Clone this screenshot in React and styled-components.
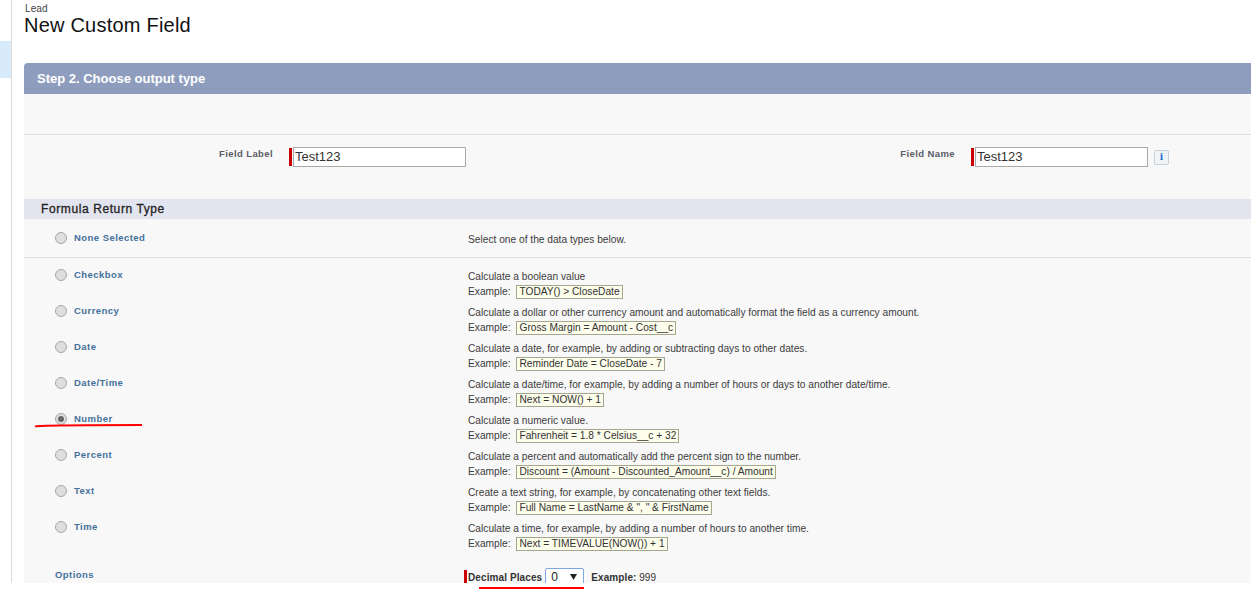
import React from "react"
import styled, { createGlobalStyle } from "styled-components"

const GlobalStyle = createGlobalStyle`
  html, body {
    margin: 0;
    padding: 0;
    background: #fff;
    overflow: hidden;
  }
  body {
    font-family: "Liberation Sans", Arial, sans-serif;
    color: #222;
  }
`

const Page = styled.div`
  position: relative;
  display: flex;
  height: 583px;
  overflow: hidden;
`

const Sidebar = styled.div`
  flex: 0 0 11px;
  padding-top: 41px;
  border-right: 1px solid #dcdcdc;
`

const SidebarActive = styled.div`
  height: 37px;
  background: #d8ebfb;
`

const Main = styled.div`
  flex: 1;
  min-width: 0;
  padding-left: 12px;
`

const TitleBlock = styled.div`
  height: 63px;
  padding-top: 4px;
  box-sizing: border-box;
`

const Crumb = styled.div`
  font-size: 10px;
  line-height: 10px;
  padding-left: 1px;
  letter-spacing: 0.1px;
  color: #444;
`

const Title = styled.h1`
  margin: 0;
  font-size: 20px;
  line-height: 22px;
  font-weight: 400;
  letter-spacing: 0.22px;
  color: #111;
`

const Panel = styled.div`
  background: #f8f8f8;
  height: 520px;
  overflow: hidden;
`

const PanelHeader = styled.div`
  height: 31px;
  padding-left: 13px;
  display: flex;
  align-items: center;
  background: #8e9dbe;
  border-radius: 4px 0 0 0;
  color: #fff;
  font-size: 13px;
  font-weight: 700;
`

const Toolbar = styled.div`
  height: 40px;
  border-bottom: 1px solid #dfdfdf;
`

const FieldsRow = styled.div`
  display: grid;
  grid-template-columns: 265px 412px 270px 1fr;
  height: 64px;
  padding-top: 12px;
  box-sizing: border-box;
`

const FieldLabel = styled.label`
  padding: 1px 16px 0 0;
  text-align: right;
  font-size: 9.5px;
  line-height: 12px;
  font-weight: 700;
  letter-spacing: 0.4px;
  color: #5c5c66;
`

const RequiredInput = styled.div`
  display: flex;
  align-items: flex-start;
  gap: 1px;
  &::before {
    content: "";
    width: 3px;
    height: 18px;
    margin-top: 1px;
    background: #c00;
  }
`

const TextBox = styled.div`
  width: 173px;
  height: 20px;
  box-sizing: border-box;
  padding-left: 1px;
  background: #fff;
  border: 1px solid #a9a9a9;
  font-size: 13px;
  line-height: 18px;
  color: #333;
`

const InfoButton = styled.span`
  width: 13px;
  height: 13px;
  margin: 3px 0 0 5px;
  border: 1px solid #c8d0d8;
  border-radius: 2px;
  background: #f1f4f7;
  color: #1b6fc9;
  font-family: "DejaVu Serif", serif;
  font-size: 9px;
  font-weight: 700;
  line-height: 13px;
  text-align: center;
`

const SectionBar = styled.div`
  height: 20px;
  padding-left: 17px;
  background: #e2e5ef;
  font-size: 12px;
  line-height: 20px;
  letter-spacing: 0.6px;
  color: #222;
  -webkit-text-stroke: 0.3px #222;
`

const Row = styled.div`
  display: grid;
  grid-template-columns: 413px 1fr;
  padding-left: 31px;
  height: ${p => p.$height}px;
  box-sizing: border-box;
  border-bottom: ${p => (p.$divider ? "1px solid #dfdfdf" : "none")};
`

const OptionLabel = styled.div`
  display: flex;
  align-items: flex-start;
  gap: 7px;
  font-size: 9.5px;
  line-height: 12px;
  font-weight: 700;
  letter-spacing: 0.45px;
  color: #44709c;
`

const Radio = styled.span`
  width: 12px;
  height: 12px;
  box-sizing: border-box;
  margin-top: ${p => p.$top}px;
  border: 1px solid #a8a8a8;
  border-radius: 50%;
  background: #dedede;
  display: flex;
  align-items: center;
  justify-content: center;
  &::after {
    content: "";
    width: 6px;
    height: 6px;
    border-radius: 50%;
    background: ${p => (p.$checked ? "#666" : "transparent")};
  }
`

const LabelText = styled.span`
  padding-top: ${p => p.$top}px;
`

const OptionText = styled.div`
  padding-top: ${p => p.$top}px;
  font-size: 10.2px;
  line-height: 13px;
  color: #3c3c3c;
`

const Line = styled.div`
  height: 15px;
  display: flex;
  align-items: center;
`

const Sample = styled.span`
  margin-left: 6px;
  padding: 0 2px;
  height: 12px;
  line-height: 12px;
  border: 1px solid #a6a68e;
  background: #fdfdec;
  color: #333;
`

const OptionsRow = styled.div`
  display: grid;
  grid-template-columns: 409px 1fr;
  padding: 22px 0 0 31px;
  font-size: 10px;
  line-height: 12px;
  color: #333;
`

const OptionsLabel = styled.div`
  padding-top: 1px;
  font-size: 9.5px;
  font-weight: 700;
  letter-spacing: 0.45px;
  color: #44709c;
`

const Decimal = styled.div`
  display: flex;
  align-items: flex-start;
  white-space: nowrap;
  &::before {
    content: "";
    width: 3px;
    height: 14px;
    margin: 2px 1px 0 0;
    background: #c00;
  }
`

const DecimalLabel = styled.b`
  padding-top: 4px;
  letter-spacing: 0.1px;
`

const DecimalSelect = styled.div`
  width: 39px;
  height: 18px;
  margin: 0 7px 0 3px;
  padding: 2px 6px 0 5px;
  box-sizing: border-box;
  display: flex;
  justify-content: space-between;
  font-size: 12px;
  border: 1px solid #7ea6e0;
  border-radius: 2px;
  background: #fff;
  color: #222;
`

const Caret = styled.svg`
  width: 7px;
  height: 6px;
  margin-top: 3px;
`

const ExampleValue = styled.span`
  padding-top: 4px;
  & b {
    letter-spacing: 0.1px;
  }
`

const Marks = styled.svg`
  position: absolute;
  left: 0;
  top: 0;
  width: 100%;
  height: 100%;
  pointer-events: none;
`

const BottomMark = styled.svg`
  position: absolute;
  left: 479px;
  top: 587px;
  width: 105px;
  height: 2px;
`

const options = [
  { name: "Checkbox", text: "Calculate a boolean value", sample: "TODAY() > CloseDate" },
  {
    name: "Currency",
    text: "Calculate a dollar or other currency amount and automatically format the field as a currency amount.",
    sample: "Gross Margin = Amount - Cost__c",
  },
  {
    name: "Date",
    text: "Calculate a date, for example, by adding or subtracting days to other dates.",
    sample: "Reminder Date = CloseDate - 7",
  },
  {
    name: "Date/Time",
    text: "Calculate a date/time, for example, by adding a number of hours or days to another date/time.",
    sample: "Next = NOW() + 1",
  },
  { name: "Number", text: "Calculate a numeric value.", sample: "Fahrenheit = 1.8 * Celsius__c + 32", checked: true },
  {
    name: "Percent",
    text: "Calculate a percent and automatically add the percent sign to the number.",
    sample: "Discount = (Amount - Discounted_Amount__c) / Amount",
  },
  {
    name: "Text",
    text: "Create a text string, for example, by concatenating other text fields.",
    sample: 'Full Name = LastName & ", " & FirstName',
  },
  {
    name: "Time",
    text: "Calculate a time, for example, by adding a number of hours to another time.",
    sample: "Next = TIMEVALUE(NOW()) + 1",
  },
]

const App = () => {
  return (
    <>
      <GlobalStyle />
      <Page>
        <Sidebar>
          <SidebarActive />
        </Sidebar>
        <Main>
          <TitleBlock>
            <Crumb>Lead</Crumb>
            <Title>New Custom Field</Title>
          </TitleBlock>
          <Panel>
            <PanelHeader>Step 2. Choose output type</PanelHeader>
            <Toolbar />
            <FieldsRow>
              <FieldLabel>Field Label</FieldLabel>
              <RequiredInput>
                <TextBox>Test123</TextBox>
              </RequiredInput>
              <FieldLabel>Field Name</FieldLabel>
              <RequiredInput>
                <TextBox>Test123</TextBox>
                <InfoButton>i</InfoButton>
              </RequiredInput>
            </FieldsRow>
            <SectionBar>Formula Return Type</SectionBar>
            <Row $height={39} $divider>
              <OptionLabel>
                <Radio $top={13} />
                <LabelText $top={13}>None Selected</LabelText>
              </OptionLabel>
              <OptionText $top={14}>Select one of the data types below.</OptionText>
            </Row>
            {options.map(o => (
              <Row $height={36} key={o.name}>
                <OptionLabel>
                  <Radio $top={11} $checked={o.checked} />
                  <LabelText $top={11}>{o.name}</LabelText>
                </OptionLabel>
                <OptionText $top={11}>
                  <Line>{o.text}</Line>
                  <Line>
                    Example:
                    <Sample>{o.sample}</Sample>
                  </Line>
                </OptionText>
              </Row>
            ))}
            <OptionsRow>
              <OptionsLabel>Options</OptionsLabel>
              <Decimal>
                <DecimalLabel>Decimal Places</DecimalLabel>
                <DecimalSelect>
                  0
                  <Caret viewBox="0 0 7 6">
                    <path d="M0 0h7L3.5 6z" fill="#222" />
                  </Caret>
                </DecimalSelect>
                <ExampleValue>
                  <b>Example:</b> 999
                </ExampleValue>
              </Decimal>
            </OptionsRow>
          </Panel>
        </Main>
        <Marks>
          <path d="M35 426.5C38 425.5 100 425 142 425" fill="none" stroke="#f00" strokeWidth="2" />
        </Marks>
      </Page>
      <BottomMark viewBox="0 0 105 2">
        <rect width="105" height="2" fill="#f00" />
      </BottomMark>
    </>
  )
}

export default App
